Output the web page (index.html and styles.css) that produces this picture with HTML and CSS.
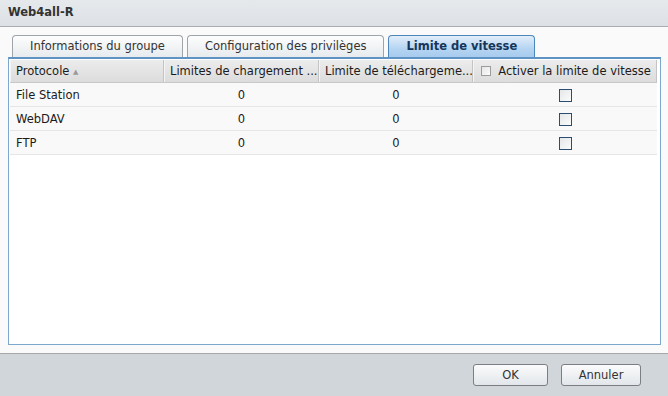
FILE: index.html
```html
<!DOCTYPE html>
<html lang="fr">
<head>
    <meta charset="UTF-8">
    <link rel="stylesheet" href="styles.css">
</head>
<body>
    <div class="window">
        <div class="title-bar">Web4all-R</div>

        <div class="content">
            <div class="tabs">
                <div class="tab">Informations du groupe</div>
                <div class="tab">Configuration des privilèges</div>
                <div class="tab active">Limite de vitesse</div>
            </div>

            <div class="panel">
                <div class="grid-head">
                    <div class="cell">Protocole <span class="sort">&#9650;</span></div>
                    <div class="cell center">Limites de chargement ...</div>
                    <div class="cell center">Limite de téléchargeme...</div>
                    <div class="cell center"><span class="box small"></span>Activer la limite de vitesse</div>
                </div>
                <div class="row">
                    <div class="cell">File Station</div>
                    <div class="cell center">0</div>
                    <div class="cell center">0</div>
                    <div class="cell center"><span class="box"></span></div>
                </div>
                <div class="row">
                    <div class="cell">WebDAV</div>
                    <div class="cell center">0</div>
                    <div class="cell center">0</div>
                    <div class="cell center"><span class="box"></span></div>
                </div>
                <div class="row">
                    <div class="cell">FTP</div>
                    <div class="cell center">0</div>
                    <div class="cell center">0</div>
                    <div class="cell center"><span class="box"></span></div>
                </div>
            </div>
        </div>

        <div class="footer">
            <button class="btn ok">OK</button>
            <button class="btn cancel">Annuler</button>
        </div>
    </div>
</body>
</html>
```

FILE: styles.css
```css
body {
    margin: 0;
    font-family: 'DejaVu Sans', Verdana, sans-serif;
    font-size: 11.5px;
    color: #1b1b1b;
}

.window {
    width: 668px;
    height: 396px;
    display: flex;
    flex-direction: column;
    background-color: #fafafa;
}

.title-bar {
    height: 26px;
    line-height: 25px;
    padding-left: 8px;
    font-weight: bold;
    font-size: 11.5px;
    color: #333;
    background: linear-gradient(#e6e9ec, #dde1e5);
    border-bottom: 1px solid #a9adb1;
}

.content {
    flex: 1;
    display: flex;
    flex-direction: column;
    padding: 8px 7px 8px 8px;
    border-bottom: 1px solid #a6a8aa;
}

.tabs {
    display: flex;
    gap: 4px;
    padding-left: 4px;
    height: 22px;
}

.tab {
    height: 21px;
    line-height: 21px;
    padding: 0 17px;
    color: #333;
    white-space: nowrap;
    border: 1px solid #9ea4aa;
    border-bottom: none;
    border-radius: 4px 4px 0 0;
    background: linear-gradient(#fdfdfd, #e7ebee);
}

.tab.active {
    border-color: #4d86bb;
    font-weight: bold;
    color: #14365a;
    background: linear-gradient(#e3eefa, #b5d4f1 60%, #a7cbee);
}

.panel {
    flex: 1;
    border: 1px solid #7da8ce;
    border-top: 2px solid #5f93c4;
    padding: 1px 3px 0 1px;
    background-color: #fff;
}

.grid-head,
.row {
    display: grid;
    grid-template-columns: 154px 155px 154px 184px;
}

.grid-head {
    height: 22px;
    background: linear-gradient(#ececec, #dcdcdc);
    border-bottom: 1px solid #c8c8c8;
}

.grid-head .cell {
    line-height: 22px;
    border-right: 1px solid #c4c4c4;
    border-left: 1px solid #f4f4f4;
    padding: 0 5px;
    white-space: nowrap;
    overflow: hidden;
}

.row {
    height: 23px;
    background-color: #f9f9f9;
    border-bottom: 1px solid #e6e6e6;
}

.row .cell {
    line-height: 24px;
    padding: 0 6px;
}

.center {
    text-align: center;
}

.sort {
    font-size: 7px;
    color: #9a9a9a;
    vertical-align: 1px;
}

.box {
    display: inline-block;
    width: 11px;
    height: 11px;
    vertical-align: -3px;
    border: 1px solid #2c4d70;
    background: linear-gradient(135deg, #e4e6e8, #fbfbfb);
}

.box.small {
    width: 8px;
    height: 8px;
    margin: 0 7px 0 2px;
    vertical-align: -1px;
    border-color: #9c9c9c;
}

.footer {
    height: 42px;
    display: flex;
    justify-content: flex-end;
    align-items: center;
    gap: 13px;
    padding-right: 27px;
    background-color: #d1d6da;
}

.btn {
    height: 22px;
    font-family: 'DejaVu Sans', Verdana, sans-serif;
    font-size: 11.5px;
    color: #333;
    border: 1px solid #7b7e82;
    border-radius: 3px;
    background: linear-gradient(#fbfbfc, #e2e6ea);
}

.ok {
    width: 75px;
}

.cancel {
    width: 80px;
}
```
